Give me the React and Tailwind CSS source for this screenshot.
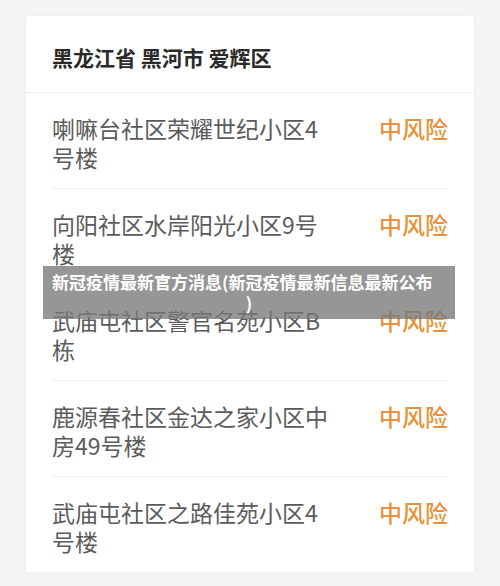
export default function App() {
  const rows = [
    "喇嘛台社区荣耀世纪小区4号楼",
    "向阳社区水岸阳光小区9号楼",
    "武庙屯社区警官名苑小区B栋",
    "鹿源春社区金达之家小区中房49号楼",
    "武庙屯社区之路佳苑小区4号楼",
  ];
  return (
    <div
      className="relative w-[500px] h-[586px] bg-[#f3f4f6] pt-4 px-[26px] overflow-hidden"
      style={{ fontFamily: '"Noto Sans CJK SC", "Noto Sans", sans-serif' }}
    >
      <div className="bg-white rounded-[4px] shadow-[0_0_6px_rgba(0,0,0,0.03)]">
        <div className="h-[77px] flex items-center pt-[8px] px-[26px] border-b border-[#eeeeee]">
          <span className="text-[21px] font-bold text-[#2a2a2a]">黑龙江省 黑河市 爱辉区</span>
        </div>
        <div className="px-[26px]">
          {rows.map((r, i) => (
            <div
              key={i}
              className={`flex justify-between pt-[21px] pb-[16px] ${i < rows.length - 1 ? "border-b border-[#eeeeee]" : ""}`}
            >
              <div className="w-[282px] text-[23px] leading-[29px] text-[#5b5b5b]">{r}</div>
              <div className="text-[23px] leading-[29px] text-[#e8913a] font-medium">中风险</div>
            </div>
          ))}
        </div>
      </div>
      <div className="absolute left-[43px] top-[266px] w-[412px] h-[53px] bg-[rgba(120,120,120,0.78)] text-white font-bold text-[17px] leading-[21px] pt-[5px]">
        <div className="pl-[9px] whitespace-nowrap">新冠疫情最新官方消息(新冠疫情最新信息最新公布</div>
        <div className="text-center">)</div>
      </div>
    </div>
  );
}
